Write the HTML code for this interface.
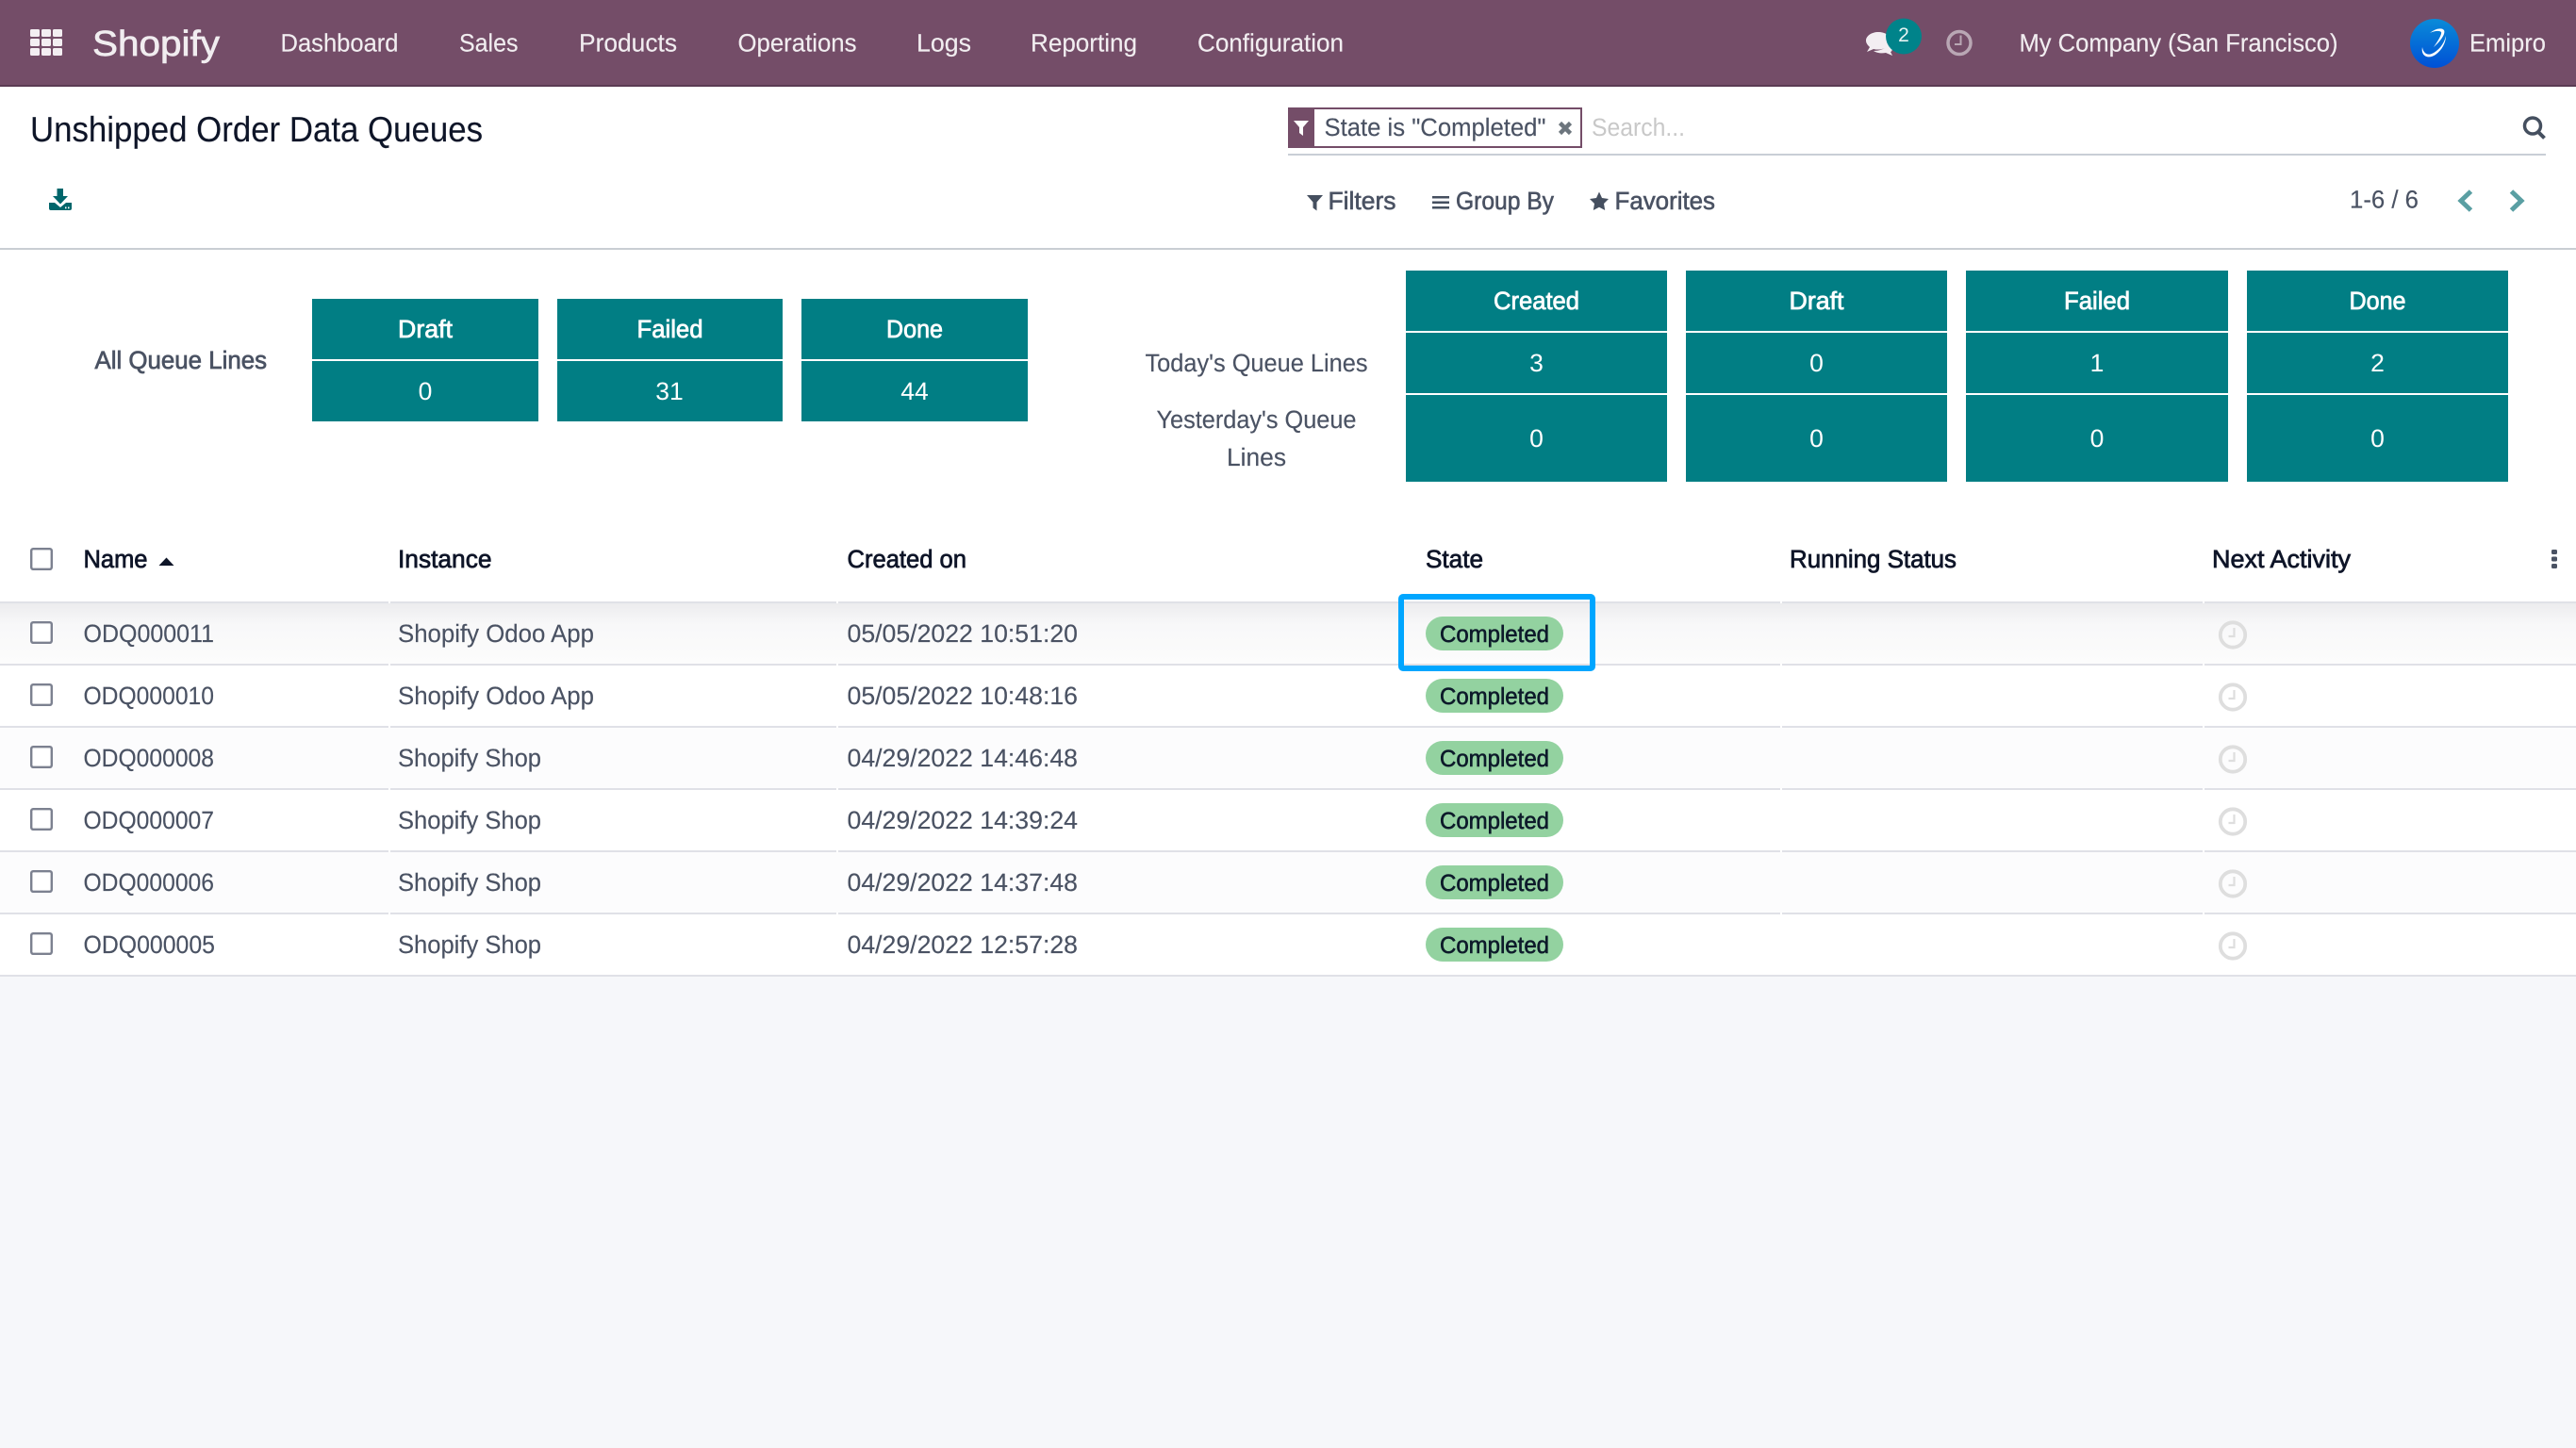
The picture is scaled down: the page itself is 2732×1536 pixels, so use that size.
<!DOCTYPE html>
<html lang="en"><head><meta charset="utf-8"><title>Unshipped Order Data Queues</title>
<style>
html,body{margin:0;padding:0;background:#f6f7fa;width:2732px;height:1536px;overflow:hidden}
svg{display:block}
text{font-family:"Liberation Sans",Arial,sans-serif;font-size:26.5px;text-rendering:geometricPrecision}
.n{fill:#f1edf0;stroke:#f1edf0;stroke-width:.15px}
.b{fill:#4a5263;stroke:#4a5263;stroke-width:.15px}
.h{fill:#0e1528;stroke:#0e1528;stroke-width:.75px}
.g{fill:#4a5263;stroke:#4a5263;stroke-width:.6px}
.w{fill:#fff;text-anchor:middle}
.wm{fill:#fff;text-anchor:middle;stroke:#fff;stroke-width:.75px}
.c{fill:#0d1a2a;font-size:25px;stroke:#0d1a2a;stroke-width:.6px}
</style></head>
<body>
<svg xmlns="http://www.w3.org/2000/svg" width="2732" height="1536" viewBox="0 0 2732 1536">
<defs>
<linearGradient id="av" x1="0" y1="0" x2="0" y2="1"><stop offset="0" stop-color="#0a8bd8"/><stop offset="1" stop-color="#0050d6"/></linearGradient>
<linearGradient id="r1" x1="0" y1="0" x2="0" y2="1"><stop offset="0" stop-color="#ececee"/><stop offset=".35" stop-color="#f8f8f9"/><stop offset="1" stop-color="#fcfcfc"/></linearGradient>
</defs>
<rect width="2732" height="1536" fill="#f6f7fa"/>
<!-- navbar -->
<rect width="2732" height="90" fill="#744d68"/>
<rect y="90" width="2732" height="2" fill="#5b3b53"/>
<g fill="#f3eef2">
<rect x="32" y="31" width="10" height="8" rx="1.5"/><rect x="44" y="31" width="10" height="8" rx="1.5"/><rect x="56" y="31" width="10" height="8" rx="1.5"/>
<rect x="32" y="41" width="10" height="8" rx="1.5"/><rect x="44" y="41" width="10" height="8" rx="1.5"/><rect x="56" y="41" width="10" height="8" rx="1.5"/>
<rect x="32" y="51" width="10" height="8" rx="1.5"/><rect x="44" y="51" width="10" height="8" rx="1.5"/><rect x="56" y="51" width="10" height="8" rx="1.5"/>
</g>
<text x="98" y="59" class="n" style="font-size:38px;stroke-width:.7px" textLength="135" lengthAdjust="spacingAndGlyphs">Shopify</text>
<text x="297.500" y="54.5" class="n" textLength="125" lengthAdjust="spacingAndGlyphs">Dashboard</text>
<text x="487" y="54.5" class="n" textLength="62.500" lengthAdjust="spacingAndGlyphs">Sales</text>
<text x="614" y="54.5" class="n" textLength="104" lengthAdjust="spacingAndGlyphs">Products</text>
<text x="782.5" y="54.5" class="n" textLength="126" lengthAdjust="spacingAndGlyphs">Operations</text>
<text x="972" y="54.5" class="n" textLength="58" lengthAdjust="spacingAndGlyphs">Logs</text>
<text x="1093" y="54.5" class="n" textLength="113" lengthAdjust="spacingAndGlyphs">Reporting</text>
<text x="1270" y="54.5" class="n" textLength="155" lengthAdjust="spacingAndGlyphs">Configuration</text>
<!-- chat icon -->
<g fill="#f3eef2">
<path d="M2002 47c3 1 5 3 5 5 0 1-1 3-2 3l2 4-7-3c-5 1-10 0-13-2 6 0 13-2 15-7z"/>
<path d="M1992 34c-7 0-13 4-13 9 0 3 2 5 4 7l-3 5 7-3c2 .5 3 .5 5 .5 7 0 13-4 13-9.500s-6-9-13-9z"/>
</g>
<circle cx="2019" cy="38.500" r="19" fill="#00838a"/>
<text x="2019" y="44" class="wm" style="stroke:none;font-size:21px;fill:#e6f3f3">2</text>
<circle cx="2078" cy="45.500" r="12" fill="none" stroke="#b9a7b4" stroke-width="3.500"/>
<path d="M2079.500 37.500v9.500h-6.500" fill="none" stroke="#b9a7b4" stroke-width="2"/>
<text x="2141.500" y="54.500" class="n" textLength="338" lengthAdjust="spacingAndGlyphs">My Company (San Francisco)</text>
<circle cx="2582" cy="46" r="26" fill="url(#av)"/>
<path d="M2569 50C2567 60 2576 63 2583 58C2590 53 2594 45 2594 38C2592 47 2586 54 2579 57C2574 59 2570 56 2569 50Z" fill="#fff"/>
<path d="M2577 35C2583 30 2590 29 2592 32C2594 36 2588 44 2581 50C2586 43 2590 36 2589 34C2587 32 2581 33 2577 35Z" fill="#fff"/>
<text x="2619" y="54.500" class="n" textLength="81" lengthAdjust="spacingAndGlyphs">Emipro</text>
<!-- control panel -->
<rect y="92" width="2732" height="171" fill="#fff"/>
<text x="32" y="150" style="font-size:37.500px;fill:#0e1528;stroke:#0e1528;stroke-width:.15px" textLength="480" lengthAdjust="spacingAndGlyphs">Unshipped Order Data Queues</text>
<g fill="#00666b">
<path d="M60.500 200h6.500v8h5l-8 8.500-8-8.500h4.500z"/>
<path d="M52 215h6l6 5 6-5h6v6q0 2-2 2H54q-2 0-2-2z"/>
</g>
<rect x="69" y="219.500" width="1.500" height="1.800" fill="#fff"/><rect x="72" y="219.500" width="1.500" height="1.800" fill="#fff"/>
<!-- search -->
<rect x="1366" y="114" width="312" height="43" fill="#744d68"/>
<rect x="1394" y="116" width="282" height="39" fill="#fff"/>
<path d="M1372 128h16l-6 7v9l-4-3v-6z" fill="#fff"/>
<text x="1404.500" y="144" class="b" textLength="235" lengthAdjust="spacingAndGlyphs">State is "Completed"</text>
<path d="M1654.500 130.500l11 11m0-11l-11 11" stroke="#6c757d" stroke-width="4.500" fill="none"/>
<text x="1688" y="144" style="fill:#c8c8c8" textLength="99" lengthAdjust="spacingAndGlyphs">Search...</text>
<rect x="1366" y="163" width="1334" height="2" fill="#c9ced6"/>
<circle cx="2686" cy="133.500" r="8.500" fill="none" stroke="#454f5f" stroke-width="3.500"/>
<path d="M2692 140l6.500 6.500" stroke="#454f5f" stroke-width="4" fill="none"/>
<path d="M1386 207h17l-6.500 7.500v9l-4-3v-6z" fill="#454f5f"/>
<text x="1408.500" y="222" class="g" textLength="72" lengthAdjust="spacingAndGlyphs">Filters</text>
<g fill="#454f5f"><rect x="1519" y="208" width="18" height="2.500"/><rect x="1519" y="213.500" width="18" height="2.500"/><rect x="1519" y="219" width="18" height="2.500"/></g>
<text x="1544" y="222" class="g" textLength="104" lengthAdjust="spacingAndGlyphs">Group By</text>
<path d="M1696 203.500l3 6.500 7 1-5 5 1.200 7-6.200-3.300-6.200 3.300 1.200-7-5-5 7-1z" fill="#454f5f"/>
<text x="1712.500" y="222" class="g" textLength="106.500" lengthAdjust="spacingAndGlyphs">Favorites</text>
<text x="2492" y="220.500" class="b" textLength="73" lengthAdjust="spacingAndGlyphs">1-6 / 6</text>
<path d="M2620.500 203l-10.500 10 10.500 10" fill="none" stroke="#5a9fa3" stroke-width="5"/>
<path d="M2663.500 203l10.500 10-10.500 10" fill="none" stroke="#5a9fa3" stroke-width="5"/>
<!-- content -->
<rect y="263" width="2732" height="2" fill="#c9ced3"/>
<rect y="265" width="2732" height="770" fill="#fff"/>
<g fill="#017e84">
<rect x="331" y="317" width="240" height="64"/><rect x="591" y="317" width="239" height="64"/><rect x="850" y="317" width="240" height="64"/>
<rect x="331" y="383" width="240" height="64"/><rect x="591" y="383" width="239" height="64"/><rect x="850" y="383" width="240" height="64"/>
<rect x="1491" y="287" width="277" height="64"/><rect x="1788" y="287" width="277" height="64"/><rect x="2085" y="287" width="278" height="64"/><rect x="2383" y="287" width="277" height="64"/>
<rect x="1491" y="353" width="277" height="64"/><rect x="1788" y="353" width="277" height="64"/><rect x="2085" y="353" width="278" height="64"/><rect x="2383" y="353" width="277" height="64"/>
<rect x="1491" y="419" width="277" height="92"/><rect x="1788" y="419" width="277" height="92"/><rect x="2085" y="419" width="278" height="92"/><rect x="2383" y="419" width="277" height="92"/>
</g>
<text x="100.500" y="391" class="g" style="stroke-width:.7px" textLength="182.500" lengthAdjust="spacingAndGlyphs">All Queue Lines</text>
<text x="451" y="358" class="wm" textLength="58" lengthAdjust="spacingAndGlyphs">Draft</text>
<text x="710.500" y="358" class="wm" textLength="70" lengthAdjust="spacingAndGlyphs">Failed</text>
<text x="970" y="358" class="wm" textLength="60" lengthAdjust="spacingAndGlyphs">Done</text>
<text x="451" y="424" class="w">0</text><text x="710" y="424" class="w">31</text><text x="970" y="424" class="w">44</text>
<text x="1214.500" y="394" class="b" textLength="236" lengthAdjust="spacingAndGlyphs">Today's Queue Lines</text>
<text x="1226.500" y="454" class="b" textLength="212" lengthAdjust="spacingAndGlyphs">Yesterday's Queue</text>
<text x="1301" y="494" class="b" textLength="63" lengthAdjust="spacingAndGlyphs">Lines</text>
<text x="1629.500" y="328" class="wm" textLength="91" lengthAdjust="spacingAndGlyphs">Created</text>
<text x="1926.500" y="328" class="wm" textLength="58" lengthAdjust="spacingAndGlyphs">Draft</text>
<text x="2224" y="328" class="wm" textLength="70" lengthAdjust="spacingAndGlyphs">Failed</text>
<text x="2521.500" y="328" class="wm" textLength="60" lengthAdjust="spacingAndGlyphs">Done</text>
<text x="1629.500" y="394" class="w">3</text><text x="1926.500" y="394" class="w">0</text><text x="2224" y="394" class="w">1</text><text x="2521.500" y="394" class="w">2</text>
<text x="1629.500" y="474" class="w">0</text><text x="1926.500" y="474" class="w">0</text><text x="2224" y="474" class="w">0</text><text x="2521.500" y="474" class="w">0</text>
<!-- list header -->
<text x="88.500" y="602" class="h" textLength="68" lengthAdjust="spacingAndGlyphs">Name</text>
<path d="M168.500 600l8-8.500 8 8.500z" fill="#0e1528"/>
<text x="422" y="602" class="h" textLength="99.500" lengthAdjust="spacingAndGlyphs">Instance</text>
<text x="898.500" y="602" class="h" textLength="126.500" lengthAdjust="spacingAndGlyphs">Created on</text>
<text x="1512" y="602" class="h" textLength="61" lengthAdjust="spacingAndGlyphs">State</text>
<text x="1898" y="602" class="h" textLength="177" lengthAdjust="spacingAndGlyphs">Running Status</text>
<text x="2346" y="602" class="h" textLength="147" lengthAdjust="spacingAndGlyphs">Next Activity</text>
<g fill="#4a5263"><rect x="2706" y="583" width="6" height="5" rx="1.500"/><rect x="2706" y="590.500" width="6" height="5" rx="1.500"/><rect x="2706" y="598" width="6" height="5" rx="1.500"/></g>
<!-- row backgrounds -->
<rect y="640" width="2732" height="65" fill="url(#r1)"/>
<rect y="772" width="2732" height="65" fill="#fcfcfd"/>
<rect y="904" width="2732" height="65" fill="#fcfcfd"/>
<g fill="#e0e1e7">
<rect y="638" width="2732" height="2"/><rect y="704" width="2732" height="2"/><rect y="770" width="2732" height="2"/><rect y="836" width="2732" height="2"/><rect y="902" width="2732" height="2"/><rect y="968" width="2732" height="2"/><rect y="1034" width="2732" height="2"/>
</g>
<g fill="#fff">
<rect x="412" y="638" width="2" height="2"/><rect x="887" y="638" width="2" height="2"/><rect x="1888" y="638" width="2" height="2"/><rect x="2336" y="638" width="2" height="2"/>
<rect x="412" y="704" width="2" height="2"/><rect x="887" y="704" width="2" height="2"/><rect x="1888" y="704" width="2" height="2"/><rect x="2336" y="704" width="2" height="2"/>
<rect x="412" y="770" width="2" height="2"/><rect x="887" y="770" width="2" height="2"/><rect x="1888" y="770" width="2" height="2"/><rect x="2336" y="770" width="2" height="2"/>
<rect x="412" y="836" width="2" height="2"/><rect x="887" y="836" width="2" height="2"/><rect x="1888" y="836" width="2" height="2"/><rect x="2336" y="836" width="2" height="2"/>
<rect x="412" y="902" width="2" height="2"/><rect x="887" y="902" width="2" height="2"/><rect x="1888" y="902" width="2" height="2"/><rect x="2336" y="902" width="2" height="2"/>
<rect x="412" y="968" width="2" height="2"/><rect x="887" y="968" width="2" height="2"/><rect x="1888" y="968" width="2" height="2"/><rect x="2336" y="968" width="2" height="2"/>
</g>
<!-- checkboxes -->
<g fill="#fff" stroke="#7c8190" stroke-width="2.400">
<rect x="33.200" y="582.200" width="21.600" height="21.600" rx="2"/>
<rect x="33.200" y="660.200" width="21.600" height="21.600" rx="2"/>
<rect x="33.200" y="726.200" width="21.600" height="21.600" rx="2"/>
<rect x="33.200" y="792.200" width="21.600" height="21.600" rx="2"/>
<rect x="33.200" y="858.200" width="21.600" height="21.600" rx="2"/>
<rect x="33.200" y="924.200" width="21.600" height="21.600" rx="2"/>
<rect x="33.200" y="990.200" width="21.600" height="21.600" rx="2"/>
</g>
<!-- rows -->
<text x="88.500" y="681" class="b" textLength="138.500" lengthAdjust="spacingAndGlyphs">ODQ000011</text>
<text x="422" y="681" class="b" textLength="208" lengthAdjust="spacingAndGlyphs">Shopify Odoo App</text>
<text x="898.500" y="681" class="b" textLength="244.500" lengthAdjust="spacingAndGlyphs">05/05/2022 10:51:20</text>
<text x="88.500" y="747" class="b" textLength="138.500" lengthAdjust="spacingAndGlyphs">ODQ000010</text>
<text x="422" y="747" class="b" textLength="208" lengthAdjust="spacingAndGlyphs">Shopify Odoo App</text>
<text x="898.500" y="747" class="b" textLength="244.500" lengthAdjust="spacingAndGlyphs">05/05/2022 10:48:16</text>
<text x="88.500" y="813" class="b" textLength="138.500" lengthAdjust="spacingAndGlyphs">ODQ000008</text>
<text x="422" y="813" class="b" textLength="152" lengthAdjust="spacingAndGlyphs">Shopify Shop</text>
<text x="898.500" y="813" class="b" textLength="244.500" lengthAdjust="spacingAndGlyphs">04/29/2022 14:46:48</text>
<text x="88.500" y="879" class="b" textLength="138.500" lengthAdjust="spacingAndGlyphs">ODQ000007</text>
<text x="422" y="879" class="b" textLength="152" lengthAdjust="spacingAndGlyphs">Shopify Shop</text>
<text x="898.500" y="879" class="b" textLength="244.500" lengthAdjust="spacingAndGlyphs">04/29/2022 14:39:24</text>
<text x="88.500" y="945" class="b" textLength="138.500" lengthAdjust="spacingAndGlyphs">ODQ000006</text>
<text x="422" y="945" class="b" textLength="152" lengthAdjust="spacingAndGlyphs">Shopify Shop</text>
<text x="898.500" y="945" class="b" textLength="244.500" lengthAdjust="spacingAndGlyphs">04/29/2022 14:37:48</text>
<text x="88.500" y="1011" class="b" textLength="139.500" lengthAdjust="spacingAndGlyphs">ODQ000005</text>
<text x="422" y="1011" class="b" textLength="152" lengthAdjust="spacingAndGlyphs">Shopify Shop</text>
<text x="898.500" y="1011" class="b" textLength="244.500" lengthAdjust="spacingAndGlyphs">04/29/2022 12:57:28</text>
<!-- badges -->
<g fill="#93d2a0">
<rect x="1512" y="654" width="146" height="36" rx="18"/><rect x="1512" y="720" width="146" height="36" rx="18"/><rect x="1512" y="786" width="146" height="36" rx="18"/><rect x="1512" y="852" width="146" height="36" rx="18"/><rect x="1512" y="918" width="146" height="36" rx="18"/><rect x="1512" y="984" width="146" height="36" rx="18"/>
</g>
<text x="1527" y="681" class="c" textLength="116" lengthAdjust="spacingAndGlyphs">Completed</text>
<text x="1527" y="747" class="c" textLength="116" lengthAdjust="spacingAndGlyphs">Completed</text>
<text x="1527" y="813" class="c" textLength="116" lengthAdjust="spacingAndGlyphs">Completed</text>
<text x="1527" y="879" class="c" textLength="116" lengthAdjust="spacingAndGlyphs">Completed</text>
<text x="1527" y="945" class="c" textLength="116" lengthAdjust="spacingAndGlyphs">Completed</text>
<text x="1527" y="1011" class="c" textLength="116" lengthAdjust="spacingAndGlyphs">Completed</text>
<!-- activity clocks -->
<g fill="none" stroke="#dedede">
<g stroke-width="3.800"><circle cx="2368" cy="673.500" r="13.200"/><circle cx="2368" cy="739.500" r="13.200"/><circle cx="2368" cy="805.500" r="13.200"/><circle cx="2368" cy="871.500" r="13.200"/><circle cx="2368" cy="937.500" r="13.200"/><circle cx="2368" cy="1003.500" r="13.200"/></g>
<g stroke-width="2.200"><path d="M2369.500 666v9h-6"/><path d="M2369.500 732v9h-6"/><path d="M2369.500 798v9h-6"/><path d="M2369.500 864v9h-6"/><path d="M2369.500 930v9h-6"/><path d="M2369.500 996v9h-6"/></g>
</g>
<!-- highlight -->
<rect x="1486" y="633" width="203" height="76" rx="2" fill="none" stroke="#00a6ff" stroke-width="6"/>
</svg>
</body></html>
